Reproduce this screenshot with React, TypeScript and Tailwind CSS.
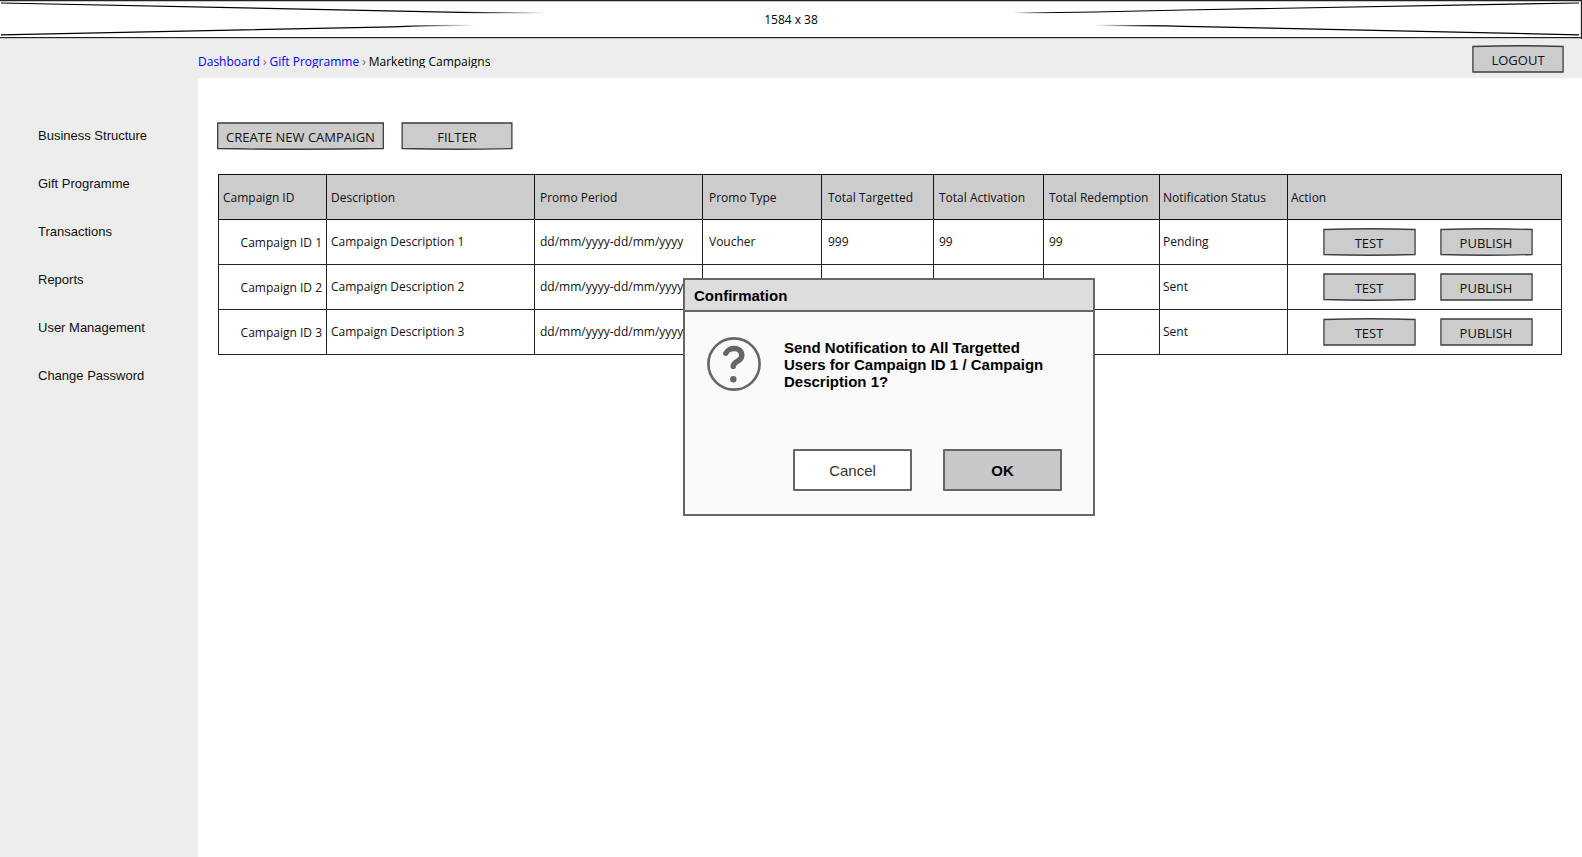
import React from "react";

const sketch = "font-['Open_Sans',sans-serif] leading-4 font-normal";

type Bow = "none" | "top" | "bottom" | "both";

const outlines: Record<Bow, string> = {
  none: "M1 1H99V27H1Z",
  top: "M1 1.5Q50 0 99 1.5V27H1Z",
  bottom: "M1 1H99V26.5Q50 28 1 26.5Z",
  both: "M1 1.5Q50 0 99 1.5V26.5Q50 28 1 26.5Z",
};

function SketchButton({ children, bow = "none", className }: { children: React.ReactNode; bow?: Bow; className: string }) {
  return (
    <button type="button" className={`relative isolate h-7 pt-0.5 text-[13px] text-[#111] ${sketch} ${className}`}>
      <svg
        className="absolute inset-0 -z-10 h-full w-full"
        viewBox="0 0 100 28"
        preserveAspectRatio="none"
        fill="#cccccc"
        stroke="#3d3d3d"
        strokeWidth="1.3"
        aria-hidden="true"
      >
        <path d={outlines[bow]} vectorEffect="non-scaling-stroke" />
      </svg>
      {children}
    </button>
  );
}

function Banner() {
  return (
    <header className="relative flex h-[39px] items-center justify-center bg-white">
      <svg className="absolute inset-0 h-full w-full" viewBox="0 0 1582 39" preserveAspectRatio="none" fill="none" aria-hidden="true">
        <defs>
          <linearGradient id="fadeRight" gradientUnits="userSpaceOnUse" x1="0" y1="0" x2="546" y2="0">
            <stop offset="0.85" stopColor="#000" />
            <stop offset="1" stopColor="#000" stopOpacity="0" />
          </linearGradient>
          <linearGradient id="fadeRightShort" gradientUnits="userSpaceOnUse" x1="0" y1="0" x2="475" y2="0">
            <stop offset="0.85" stopColor="#000" />
            <stop offset="1" stopColor="#000" stopOpacity="0" />
          </linearGradient>
          <linearGradient id="fadeLeft" gradientUnits="userSpaceOnUse" x1="1013" y1="0" x2="1582" y2="0">
            <stop offset="0" stopColor="#000" stopOpacity="0" />
            <stop offset="0.08" stopColor="#000" />
          </linearGradient>
          <linearGradient id="fadeLeftShort" gradientUnits="userSpaceOnUse" x1="1094" y1="0" x2="1582" y2="0">
            <stop offset="0" stopColor="#000" stopOpacity="0" />
            <stop offset="0.12" stopColor="#000" />
          </linearGradient>
        </defs>
        <path d="M0 0.6H1582M0 37.6H1582M1581.5 0V39" stroke="#222" strokeWidth="1.3" />
        <path d="M1 3Q393 10.5 460 12.3Q500 12.8 546 12.8" stroke="url(#fadeRight)" strokeWidth="1.2" />
        <path d="M1 34.8L393 26.8Q430 25.4 475 25.4" stroke="url(#fadeRightShort)" strokeWidth="1.2" />
        <path d="M1579 3L1184 10L1095 12Q1060 12.7 1013 12.7" stroke="url(#fadeLeft)" strokeWidth="1.2" />
        <path d="M1579 34.8L1184 26.3Q1150 25.4 1094 25.4" stroke="url(#fadeLeftShort)" strokeWidth="1.2" />
      </svg>
      <span className={`relative text-xs ${sketch}`}>1584 x 38</span>
    </header>
  );
}

const navItems = ["Business Structure", "Gift Programme", "Transactions", "Reports", "User Management", "Change Password"];

function Sidebar() {
  return (
    <nav className="w-[198px] shrink-0 bg-[#ededed] pt-[73px] pl-[38px]" aria-label="Main">
      <ul>
        {navItems.map((item) => (
          <li key={item} className="flex h-12 items-center">
            <a href="#" className="text-[13px] leading-4 text-[#111]">
              {item}
            </a>
          </li>
        ))}
      </ul>
    </nav>
  );
}

const columns = [
  { label: "Campaign ID", width: "w-[108px]", pad: "px-1" },
  { label: "Description", width: "w-[208px]", pad: "pl-1" },
  { label: "Promo Period", width: "w-[168px]", pad: "pl-[5px]" },
  { label: "Promo Type", width: "w-[119px]", pad: "pl-1.5" },
  { label: "Total Targetted", width: "w-[112px]", pad: "pl-1.5" },
  { label: "Total Activation", width: "w-[110px]", pad: "pl-[5px]" },
  { label: "Total Redemption", width: "w-[116px]", pad: "pl-[5px]" },
  { label: "Notification Status", width: "w-[128px]", pad: "pl-[3px]" },
  { label: "Action", width: "", pad: "pl-[3px]" },
];

const rows: { cells: string[]; test: Bow; publish: Bow }[] = [
  { cells: ["Campaign ID 1", "Campaign Description 1", "dd/mm/yyyy-dd/mm/yyyy", "Voucher", "999", "99", "99", "Pending"], test: "both", publish: "both" },
  { cells: ["Campaign ID 2", "Campaign Description 2", "dd/mm/yyyy-dd/mm/yyyy", "", "", "", "", "Sent"], test: "bottom", publish: "none" },
  { cells: ["Campaign ID 3", "Campaign Description 3", "dd/mm/yyyy-dd/mm/yyyy", "", "", "", "", "Sent"], test: "top", publish: "none" },
];

function CampaignTable() {
  return (
    <table className={`w-full table-fixed border-collapse text-left text-xs whitespace-nowrap text-[#111] ${sketch}`}>
      <thead>
        <tr className="h-[45px] bg-[#cccccc]">
          {columns.map((c) => (
            <th key={c.label} scope="col" className={`border border-[#111] pt-0.5 font-normal ${c.width} ${c.pad}`}>
              {c.label}
            </th>
          ))}
        </tr>
      </thead>
      <tbody>
        {rows.map((row) => (
          <tr key={row.cells[0]} className="h-[45px]">
            {row.cells.map((cell, i) => (
              <td key={columns[i].label} className={`border border-[#222] ${columns[i].pad} ${i === 0 ? "pt-0.5 text-right" : ""}`}>
                {cell}
              </td>
            ))}
            <td className="border border-[#222] pl-1.5">
              <div className="flex justify-center gap-6">
                <SketchButton bow={row.test} className="w-[93px]">TEST</SketchButton>
                <SketchButton bow={row.publish} className="w-[93px]">PUBLISH</SketchButton>
              </div>
            </td>
          </tr>
        ))}
      </tbody>
    </table>
  );
}

function ConfirmDialog() {
  return (
    <div
      role="dialog"
      aria-labelledby="confirm-title"
      className="absolute top-[200px] right-0.5 left-0 mx-auto w-[412px] border-2 border-[#666666] bg-[#fafafa] text-[15px] text-black"
    >
      <h2 id="confirm-title" className="flex h-8 items-center border-b-2 border-[#666666] bg-[#dddddd] pt-0.5 pl-[9px] font-bold">
        Confirmation
      </h2>
      <div className="flex gap-[23px] pt-[25px] pl-[22px]">
        <svg className="size-[54px] shrink-0" viewBox="0 0 54 54" fill="none" stroke="#666666" aria-hidden="true">
          <circle cx="27" cy="27" r="25.6" strokeWidth="2.6" />
          <path d="M18.8 16.3C21.5 9.6 34.8 9.4 34.8 18.4C34.8 25 26.2 23.6 26.2 29.4" strokeWidth="5.4" strokeLinecap="round" />
          <circle cx="26.3" cy="42.3" r="3.2" fill="#666666" stroke="none" />
        </svg>
        <p className="w-[270px] pt-0.5 leading-[17px] font-bold">
          Send Notification to All Targetted Users for Campaign ID 1 / Campaign Description 1?
        </p>
      </div>
      <div className="flex justify-end gap-[31px] pt-[58px] pr-[31px] pb-[23px]">
        <button type="button" className="h-[42px] w-[119px] rounded-[1px] border-2 border-[#666666] bg-white pt-0.5 text-[#333]">
          Cancel
        </button>
        <button type="button" className="h-[42px] w-[119px] rounded-[1px] border-2 border-[#666666] bg-[#c8c8c8] pt-0.5 font-bold">
          OK
        </button>
      </div>
    </div>
  );
}

export default function App() {
  return (
    <div className="flex min-h-screen flex-col bg-white font-['Liberation_Sans',Arial,sans-serif] text-black">
      <Banner />
      <div className="flex grow">
        <Sidebar />
        <div className="flex min-w-0 grow flex-col">
          <div className="flex h-[39px] items-center justify-between bg-[#ededed] pr-[18px]">
            <nav aria-label="Breadcrumb" className={`mt-1 flex h-[14px] gap-[3px] overflow-hidden text-xs ${sketch}`}>
              <a href="#" className="text-[#0000ff]">Dashboard</a>
              <span className="text-[#666666]">›</span>
              <a href="#" className="text-[#0000ff]">Gift Programme</a>
              <span className="text-[#666666]">›</span>
              <span>Marketing Campaigns</span>
            </nav>
            <SketchButton bow="top" className="w-[92px]">LOGOUT</SketchButton>
          </div>
          <main className="relative grow pt-11 pr-5 pl-[18px]">
            <div className="flex gap-4 pb-6">
              <SketchButton bow="bottom" className="w-[169px]">CREATE NEW CAMPAIGN</SketchButton>
              <SketchButton bow="bottom" className="w-[112px]">FILTER</SketchButton>
            </div>
            <div className="pl-0.5">
              <CampaignTable />
            </div>
            <ConfirmDialog />
          </main>
        </div>
      </div>
    </div>
  );
}
